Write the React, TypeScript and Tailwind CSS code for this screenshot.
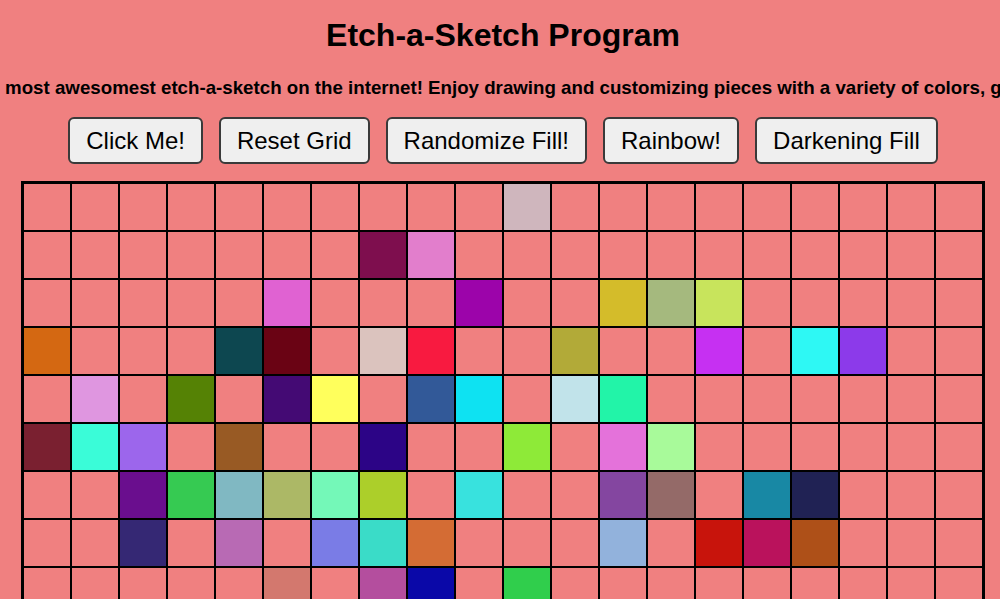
import React from 'react';

const SIZE = 20;

// painted squares, keyed by "row,col"
const painted: Record<string, string> = {
  '0,10': '#cfb6bd',
  '1,7': '#7e0e4e',
  '1,8': '#e27ecc',
  '2,5': '#e062d2',
  '2,9': '#9c04aa',
  '2,12': '#d4bc2a',
  '2,13': '#a5b97e',
  '2,14': '#c8e45c',
  '3,0': '#d46812',
  '3,4': '#0d4750',
  '3,5': '#6a0314',
  '3,7': '#dbc3be',
  '3,8': '#f81a40',
  '3,11': '#b2aa38',
  '3,14': '#c630f2',
  '3,16': '#2ef8f4',
  '3,17': '#8c3aea',
  '4,1': '#df96e0',
  '4,3': '#558205',
  '4,5': '#440a74',
  '4,6': '#ffff5c',
  '4,8': '#325998',
  '4,9': '#0ee2f2',
  '4,11': '#c1e3ea',
  '4,12': '#22f4a8',
  '5,0': '#7a2030',
  '5,1': '#3afcd8',
  '5,2': '#9c66ec',
  '5,4': '#985a24',
  '5,7': '#2c0486',
  '5,10': '#8eea38',
  '5,12': '#e472da',
  '5,13': '#a8fa9a',
  '6,2': '#6a0e8e',
  '6,3': '#36ca52',
  '6,4': '#80b8c2',
  '6,5': '#acb866',
  '6,6': '#74f8b8',
  '6,7': '#accf2a',
  '6,9': '#38e2de',
  '6,12': '#8446a0',
  '6,13': '#946a68',
  '6,15': '#1888a4',
  '6,16': '#202254',
  '7,2': '#352874',
  '7,4': '#b86ab4',
  '7,6': '#7a7ce6',
  '7,7': '#3adcc8',
  '7,8': '#d46c34',
  '7,12': '#92b2dc',
  '7,14': '#c8140c',
  '7,15': '#ba125c',
  '7,16': '#ae5018',
  '8,5': '#d3786e',
  '8,7': '#b44e9e',
  '8,8': '#0a08a8',
  '8,10': '#30ce4c',
};

const buttons = ['Click Me!', 'Reset Grid', 'Randomize Fill!', 'Rainbow!', 'Darkening Fill'];

export default function App() {
  const cells = [];
  for (let r = 0; r < SIZE; r++) {
    for (let c = 0; c < SIZE; c++) {
      const color = painted[`${r},${c}`];
      cells.push(
        <div
          key={`${r}-${c}`}
          className="w-[48px] h-[48px] border border-black"
          style={color ? { backgroundColor: color } : undefined}
        />
      );
    }
  }

  return (
    <div className="w-full h-[599px] overflow-hidden bg-[#f08080] text-black font-['Liberation_Sans',Arial,sans-serif]">
      <div className="w-[1006px] flex flex-col items-center">
        <h1 className="mt-[17px] text-[32px] leading-[37px] font-bold">Etch-a-Sketch Program</h1>

        <p className="self-start ml-[-138px] mt-[23px] whitespace-nowrap text-[18.72px] leading-[21px] font-bold">
          Welcome to the most awesomest etch-a-sketch on the internet! Enjoy drawing and customizing pieces with a variety of colors, grid sizes, and more!
        </p>

        <div className="mt-[19px] flex gap-4">
          {buttons.map(label => (
            <button
              key={label}
              className="px-4 py-2 text-[24px] leading-[27px] bg-[#efefef] border-2 border-[#3a3a3a] rounded-md"
            >
              {label}
            </button>
          ))}
        </div>

        {/* Drawing grid */}
        <div className="mt-[17px] border-2 border-black grid grid-cols-[repeat(20,48px)]">
          {cells}
        </div>
      </div>
    </div>
  );
}
